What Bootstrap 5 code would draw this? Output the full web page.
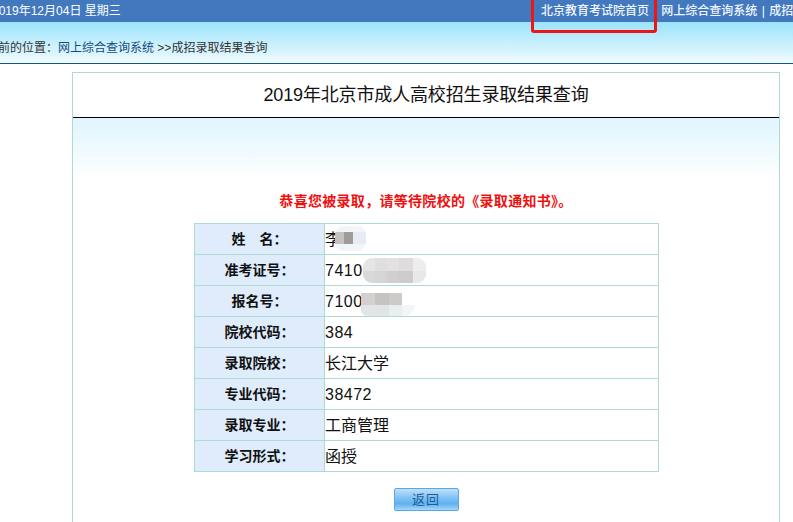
<!DOCTYPE html>
<html lang="zh-CN"><head>
<meta charset="UTF-8">
<title>录取结果查询</title>
<link href="https://cdn.jsdelivr.net/npm/bootstrap@5.3.2/dist/css/bootstrap.min.css" rel="stylesheet">
<style>
html, body { height: 522px; overflow: hidden; }
body { font-family: "Liberation Sans", "Noto Sans CJK SC", sans-serif; background: #fff; color: #111; }
.topbar { height: 22px; background: #4178be; color: #fff; font-size: 12px; line-height: 22px; white-space: nowrap; overflow: hidden; }
.topbar .date { flex: 0 0 549px; margin-left: -8px; }
.toplinks { font-size: 12px; font-weight: 500; }
.toplinks a { color: #f0f6ff; text-decoration: none; }
.toplinks .sep { margin: 0 4.5px; }
.crumb { height: 42px; background: linear-gradient(#9ce3fb, #f0fbff); border-bottom: 1px solid #14568c; font-size: 12px; line-height: 52px; white-space: nowrap; margin-left: -14px; color: #333; }
.crumb a { color: #164a80; text-decoration: none; }
.redbox { position: absolute; left: 531px; top: -4px; width: 126px; height: 37px; border: 3px solid #f01414; border-radius: 3px; }
.panel { width: 708px; margin: 8px 0 0 72px; border: 1px solid #aedbd0; border-bottom: 0; height: 460px; }
.panel-title { height: 45px; border-bottom: 1px solid #000; font-size: 18px; letter-spacing: -.15px; line-height: 45px; text-align: center; color: #111; }
.panel-body { background: linear-gradient(#dff5fd, #fff 62px); padding-top: 73px; }
.notice { color: #f01010; font-size: 14px; letter-spacing: .3px; font-weight: 700; line-height: 20px; text-align: center; margin-bottom: 12px; }
.result { width: 465px; margin-left: 121px; border-collapse: collapse; table-layout: fixed; }
.result th, .result td { border: 1px solid #aedbd0; height: 31px; padding: 0; }
.result th { width: 130px; background: #deecfb; font-size: 14px; font-weight: 700; text-align: center; }
.result td { position: relative; font-size: 16px; line-height: 29px; padding-top: 1px; color: #111; background: #fff; }
.result td.numval { letter-spacing: .5px; }
.mosaic { position: absolute; display: block; background-repeat: no-repeat; }
.m1 { left: 10px; top: 2px; width: 31px; height: 25px; border-radius: 9px; background-color: #f1f4f9;
    background-image: linear-gradient(90deg, #c4c1c0 0 9px, #a09b98 9px 18px, #e6ebf4 18px); background-size: 100% 12px; background-position: 0 6px; }
.m2 { left: 38px; top: 3px; width: 63px; height: 25px; border-radius: 9px;
    background-image: linear-gradient(90deg, #e6e5e5 0 12px, #e0dede 12px 24px, #e3e1e1 24px 36px, #dedcdc 36px 50px, #ededee 50px), linear-gradient(90deg, #d9d8d8 0 12px, #d6d5d5 12px 24px, #d0cfce 24px 36px, #cdcccb 36px 50px, #e8e8e9 50px);
    background-size: 100% 13px, 100% 12px; background-position: 0 0, 0 13px; }
.m3 { left: 36px; top: 7px; width: 54px; height: 23px; border-radius: 0 0 12px 6px;
    background-image: linear-gradient(90deg, #d2d1d0 0 14px, #c6c4c3 14px 28px, #cccbca 28px 41px, transparent 41px), linear-gradient(90deg, #e2e5e5 0 28px, #e9eeee 28px 41px, #f3f6f6 41px);
    background-size: 100% 12px, 100% 11px; background-position: 0 0, 0 12px; }
.backbar { padding-top: 15px; text-align: center; }
.backbtn { width: 65px; height: 23px; padding: 0; font-size: 13px; letter-spacing: 1px; line-height: 21px; color: #1b5d96; border: 1px solid #5aa9e6; border-radius: 2px; background: linear-gradient(#bfe0fa, #7cc0f4 45%, #5fb1f0 70%, #a6d6f9); }
</style>
</head><body>
<div class="position-relative">
    <div class="topbar d-flex">
        <span class="date">2019年12月04日 星期三</span>
        <span class="toplinks"><a href="#">北京教育考试院首页</a><span class="sep">|</span><a href="#">网上综合查询系统</a><span class="sep">|</span><a href="#">成招录取结果</a></span>
    </div>
    <div class="crumb">当前的位置：<a href="#">网上综合查询系统</a> &gt;&gt;成招录取结果查询</div>
    <div class="redbox"></div>
</div>
<div class="panel">
    <div class="panel-title">2019年北京市成人高校招生录取结果查询</div>
    <div class="panel-body">
        <div class="notice">恭喜您被录取，请等待院校的《录取通知书》。</div>
        <table class="result">
            <tr><th>姓　名：</th><td>李<span class="mosaic m1"></span></td></tr>
            <tr><th>准考证号：</th><td class="numval">74100<span class="mosaic m2"></span></td></tr>
            <tr><th>报名号：</th><td class="numval">71000<span class="mosaic m3"></span></td></tr>
            <tr><th>院校代码：</th><td class="numval">384</td></tr>
            <tr><th>录取院校：</th><td>长江大学</td></tr>
            <tr><th>专业代码：</th><td class="numval">38472</td></tr>
            <tr><th>录取专业：</th><td>工商管理</td></tr>
            <tr><th>学习形式：</th><td>函授</td></tr>
        </table>
        <div class="backbar"><button type="button" class="btn backbtn">返回</button></div>
    </div>
</div>
<script src="https://cdn.jsdelivr.net/npm/bootstrap@5.3.2/dist/js/bootstrap.bundle.min.js"></script>
</body>
</html>
